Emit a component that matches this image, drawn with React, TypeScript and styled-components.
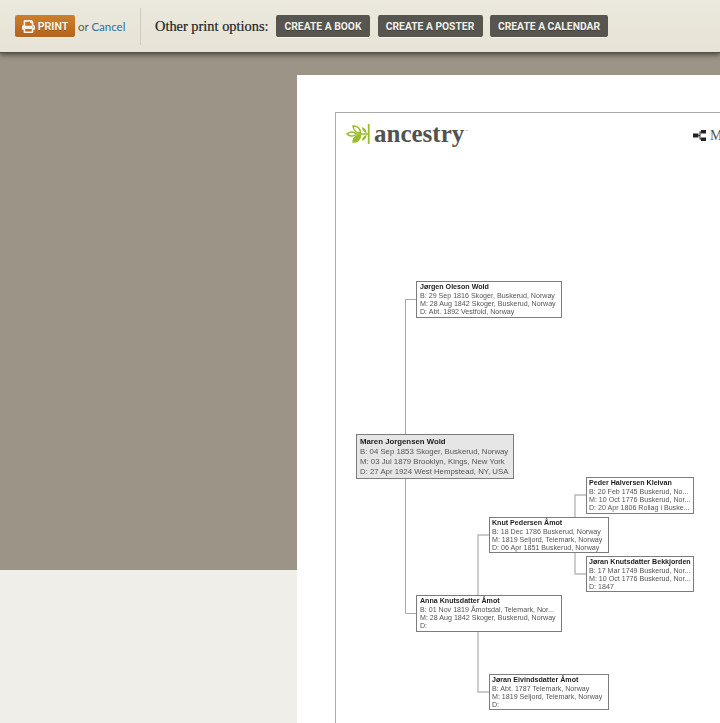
import React from 'react';
import styled, { createGlobalStyle } from 'styled-components';
import { FaPrint } from 'react-icons/fa';

const Global = createGlobalStyle`
  html, body { margin: 0; padding: 0; height: 100%; overflow: hidden; }
  body { font-family: "Liberation Sans", Arial, sans-serif; background: #f0eee8; }
`;

const Page = styled.div`
  width: 720px;
  height: 723px;
  overflow: hidden;
  display: flex;
  flex-direction: column;
`;

const Toolbar = styled.header`
  position: relative;
  z-index: 2;
  height: 52px;
  flex: none;
  display: flex;
  align-items: center;
  padding-left: 15px;
  box-sizing: border-box;
  background: linear-gradient(#ebe8dd 0%, #e7e3d6 100%);
  box-shadow: 0 1px 1px #55524a, 0 3px 5px rgba(40, 38, 32, 0.65);
`;

const ButtonBase = styled.a`
  height: 22px;
  box-sizing: border-box;
  display: inline-flex;
  align-items: center;
  justify-content: center;
  border-radius: 2px;
  color: #f4f1e8;
  font-family: "Roboto", "Lato", sans-serif;
  font-size: 10.3px;
  font-weight: 700;
  white-space: nowrap;
  text-shadow: 0 1px 0 rgba(0, 0, 0, 0.25);
`;

const PrintButton = styled(ButtonBase)`
  width: 60px;
  gap: 3px;
  font-size: 10.6px;
  background: linear-gradient(#cd7f2b, #b4641c);
  box-shadow: 0 1px 0 rgba(255, 255, 255, 0.5);
`;

const DarkButton = styled(ButtonBase)<{ $w: number }>`
  width: ${p => p.$w}px;
  background: #565550;
  box-shadow: 0 1px 0 rgba(255, 255, 255, 0.6);
`;

const CancelGroup = styled.span`
  margin-left: 3px;
  width: 50px;
  font-family: "Lato", "Open Sans", sans-serif;
  font-size: 11.5px;
  color: #5b5a54;
  white-space: nowrap;
`;

const CancelLink = styled.a`
  color: #2f6f9b;
`;

const Divider = styled.div`
  width: 1px;
  height: 37px;
  margin: 0 14px 0 12px;
  background: #cfcbbd;
`;

const OptionsLabel = styled.span`
  font-family: "Liberation Serif", serif;
  font-size: 14.4px;
  color: #222;
  margin-right: 8px;
  width: 113px;
  white-space: nowrap;
  -webkit-text-stroke: 0.2px #222;
`;

const OptionsGroup = styled.div`
  display: flex;
  gap: 7.5px;
`;

const Viewer = styled.main`
  flex: 1;
  min-height: 0;
  padding: 23px 0 0 297px;
  background: linear-gradient(#9c9587, #9c9587) no-repeat top left / 100% 518px;
`;

const Paper = styled.section`
  height: 648px;
  width: 423px;
  padding: 37px 0 0 38px;
  box-sizing: border-box;
  background: #fff;
  overflow: hidden;
`;

const Sheet = styled.div`
  position: relative;
  width: 500px;
  height: 700px;
  border: solid #aaa;
  border-width: 1px 0 0 1px;
`;

const LogoRow = styled.div`
  position: absolute;
  left: 10px;
  top: 9px;
  display: flex;
  align-items: center;
  gap: 4px;
`;

const LogoWord = styled.span`
  font-family: "Liberation Serif", serif;
  font-size: 25px;
  font-weight: 700;
  line-height: 24px;
  color: #52524e;
`;

const LogoMark = styled.sup`
  font-family: "Liberation Sans", sans-serif;
  font-size: 3px;
  color: #777;
  align-self: flex-start;
  margin: 7px 0 0 -3px;
`;

const Legend = styled.div`
  position: absolute;
  left: 357px;
  top: 14px;
  display: flex;
  align-items: center;
  gap: 4px;
  font-family: "Liberation Serif", serif;
  font-size: 14px;
  line-height: 17px;
  color: #555;
`;

const Lines = styled.svg`
  position: absolute;
  left: 0;
  top: 0;
`;

const Node = styled.article<{ $x: number; $y: number; $w: number; $h: number; $main?: boolean; $narrow?: boolean }>`
  position: absolute;
  left: ${p => p.$x - 336}px;
  top: ${p => p.$y - 113}px;
  width: ${p => p.$w}px;
  height: ${p => p.$h}px;
  box-sizing: border-box;
  border: 1px solid #7c7c7c;
  background: ${p => (p.$main ? '#e6e6e6' : '#fff')};
  padding: ${p => (p.$main ? '2px 0 0 3px' : p.$narrow ? '1px 0 0 2px' : '1px 0 0 3px')};
  font-size: ${p => (p.$main ? '7.8px' : '7.1px')};
  line-height: ${p => (p.$main ? '9.8px' : '8.1px')};
  color: #555;
  white-space: nowrap;
  overflow: hidden;
  filter: blur(0.3px);
`;

const NodeName = styled.div<{ $main?: boolean }>`
  font-weight: 700;
  color: #1c1c1c;
  line-height: ${p => (p.$main ? '10px' : '8.5px')};
`;

type Person = { x: number; y: number; w: number; h: number; name: string; b: string; m: string; d: string; main?: boolean };

const people: Person[] = [
  { x: 416, y: 281, w: 146, h: 37, name: 'Jørgen Oleson Wold', b: '29 Sep 1816 Skoger, Buskerud, Norway', m: '28 Aug 1842 Skoger, Buskerud, Norway', d: 'Abt. 1892 Vestfold, Norway' },
  { x: 356, y: 434, w: 158, h: 45, main: true, name: 'Maren Jorgensen Wold', b: '04 Sep 1853 Skoger, Buskerud, Norway', m: '03 Jul 1879 Brooklyn, Kings, New York', d: '27 Apr 1924 West Hempstead, NY, USA' },
  { x: 586, y: 477, w: 108, h: 37, name: 'Peder Halversen Kleivan', b: '20 Feb 1745 Buskerud, No...', m: '10 Oct 1776 Buskerud, Nor...', d: '20 Apr 1806 Rollag i Buske...' },
  { x: 489, y: 517, w: 120, h: 36, name: 'Knut Pedersen Åmot', b: '18 Dec 1786 Buskerud, Norway', m: '1819 Seljord, Telemark, Norway', d: '06 Apr 1851 Buskerud, Norway' },
  { x: 586, y: 556, w: 108, h: 36, name: 'Jøran Knutsdatter Bekkjorden', b: '17 Mar 1749 Buskerud, Nor...', m: '10 Oct 1776 Buskerud, Nor...', d: '1847' },
  { x: 416, y: 595, w: 146, h: 37, name: 'Anna Knutsdatter Åmot', b: '01 Nov 1819 Åmotsdal, Telemark, Nor...', m: '28 Aug 1842 Skoger, Buskerud, Norway', d: '' },
  { x: 489, y: 674, w: 120, h: 36, name: 'Jøran Eivindsdatter Åmot', b: 'Abt. 1787 Telemark, Norway', m: '1819 Seljord, Telemark, Norway', d: '' },
];

const mainConnectors = ['M416 299.5H405.5V434', 'M405.5 479V613.5H416'];
const softConnectors = ['M489 535H478V595', 'M478 632V692H489', 'M586 495H575V517', 'M575 553V574H586'];

export default function App() {
  return (
    <Page>
      <Global />
      <Toolbar>
        <PrintButton><FaPrint size={13} />PRINT</PrintButton>
        <CancelGroup>or <CancelLink>Cancel</CancelLink></CancelGroup>
        <Divider />
        <OptionsLabel>Other print options:</OptionsLabel>
        <OptionsGroup>
          <DarkButton $w={94}>CREATE A BOOK</DarkButton>
          <DarkButton $w={105}>CREATE A POSTER</DarkButton>
          <DarkButton $w={118}>CREATE A CALENDAR</DarkButton>
        </OptionsGroup>
      </Toolbar>
      <Viewer>
        <Paper>
          <Sheet>
            <LogoRow>
              <svg width="24" height="20" viewBox="0 0 24 20" fill="none" stroke="#9bbd2c" strokeWidth="1.5">
                <path d="M22.7 0V20" strokeWidth="1.8" />
                <path d="M1 10C3.5 7.4 7.5 7 10.5 10C7.5 13 3.5 12.6 1 10Z" />
                <path d="M10.5 10H22" />
                <path d="M7 2C11 1.6 14.6 4.4 14.5 9C10.5 9 7.4 6.4 7 2Z" />
                <path d="M7 18C7.4 13.6 10.5 11 14.5 11C14.6 15.6 11 18.4 7 18Z" fill="#9bbd2c" />
                <path d="M16 3C19 4 20.6 6.4 20.6 9C18 8.6 16 6.2 16 3Z" fill="#9bbd2c" stroke="none" />
                <path d="M16 17C16 13.8 18 11.4 20.6 11C20.6 13.6 19 16 16 17Z" fill="#9bbd2c" stroke="none" />
              </svg>
              <LogoWord>ancestry</LogoWord>
              <LogoMark>™</LogoMark>
            </LogoRow>
            <Legend>
              <svg width="13" height="11" viewBox="0 0 13 11" fill="#222">
                <rect x="0" y="3.5" width="5.5" height="4" />
                <rect x="8" y="0" width="5" height="3.5" />
                <rect x="8" y="7.5" width="5" height="3.5" />
                <path d="M5.5 5H6.5V1.5H8V2.5H7.5V8.5H8V9.5H6.5V6H5.5Z" />
              </svg>
              <span>M</span>
            </Legend>
            <Lines width="500" height="700" viewBox="336 113 500 700" fill="none">
              <g stroke="#a8a8a8">{mainConnectors.map(d => <path key={d} d={d} />)}</g>
              <g stroke="#b8b8b8" strokeWidth="1.4">{softConnectors.map(d => <path key={d} d={d} />)}</g>
            </Lines>
            {people.map(p => (
              <Node key={p.name} $x={p.x} $y={p.y} $w={p.w} $h={p.h} $main={p.main} $narrow={p.w <= 120}>
                <NodeName $main={p.main}>{p.name}</NodeName>
                <div>B: {p.b}</div>
                <div>M: {p.m}</div>
                <div>D: {p.d}</div>
              </Node>
            ))}
          </Sheet>
        </Paper>
      </Viewer>
    </Page>
  );
}
